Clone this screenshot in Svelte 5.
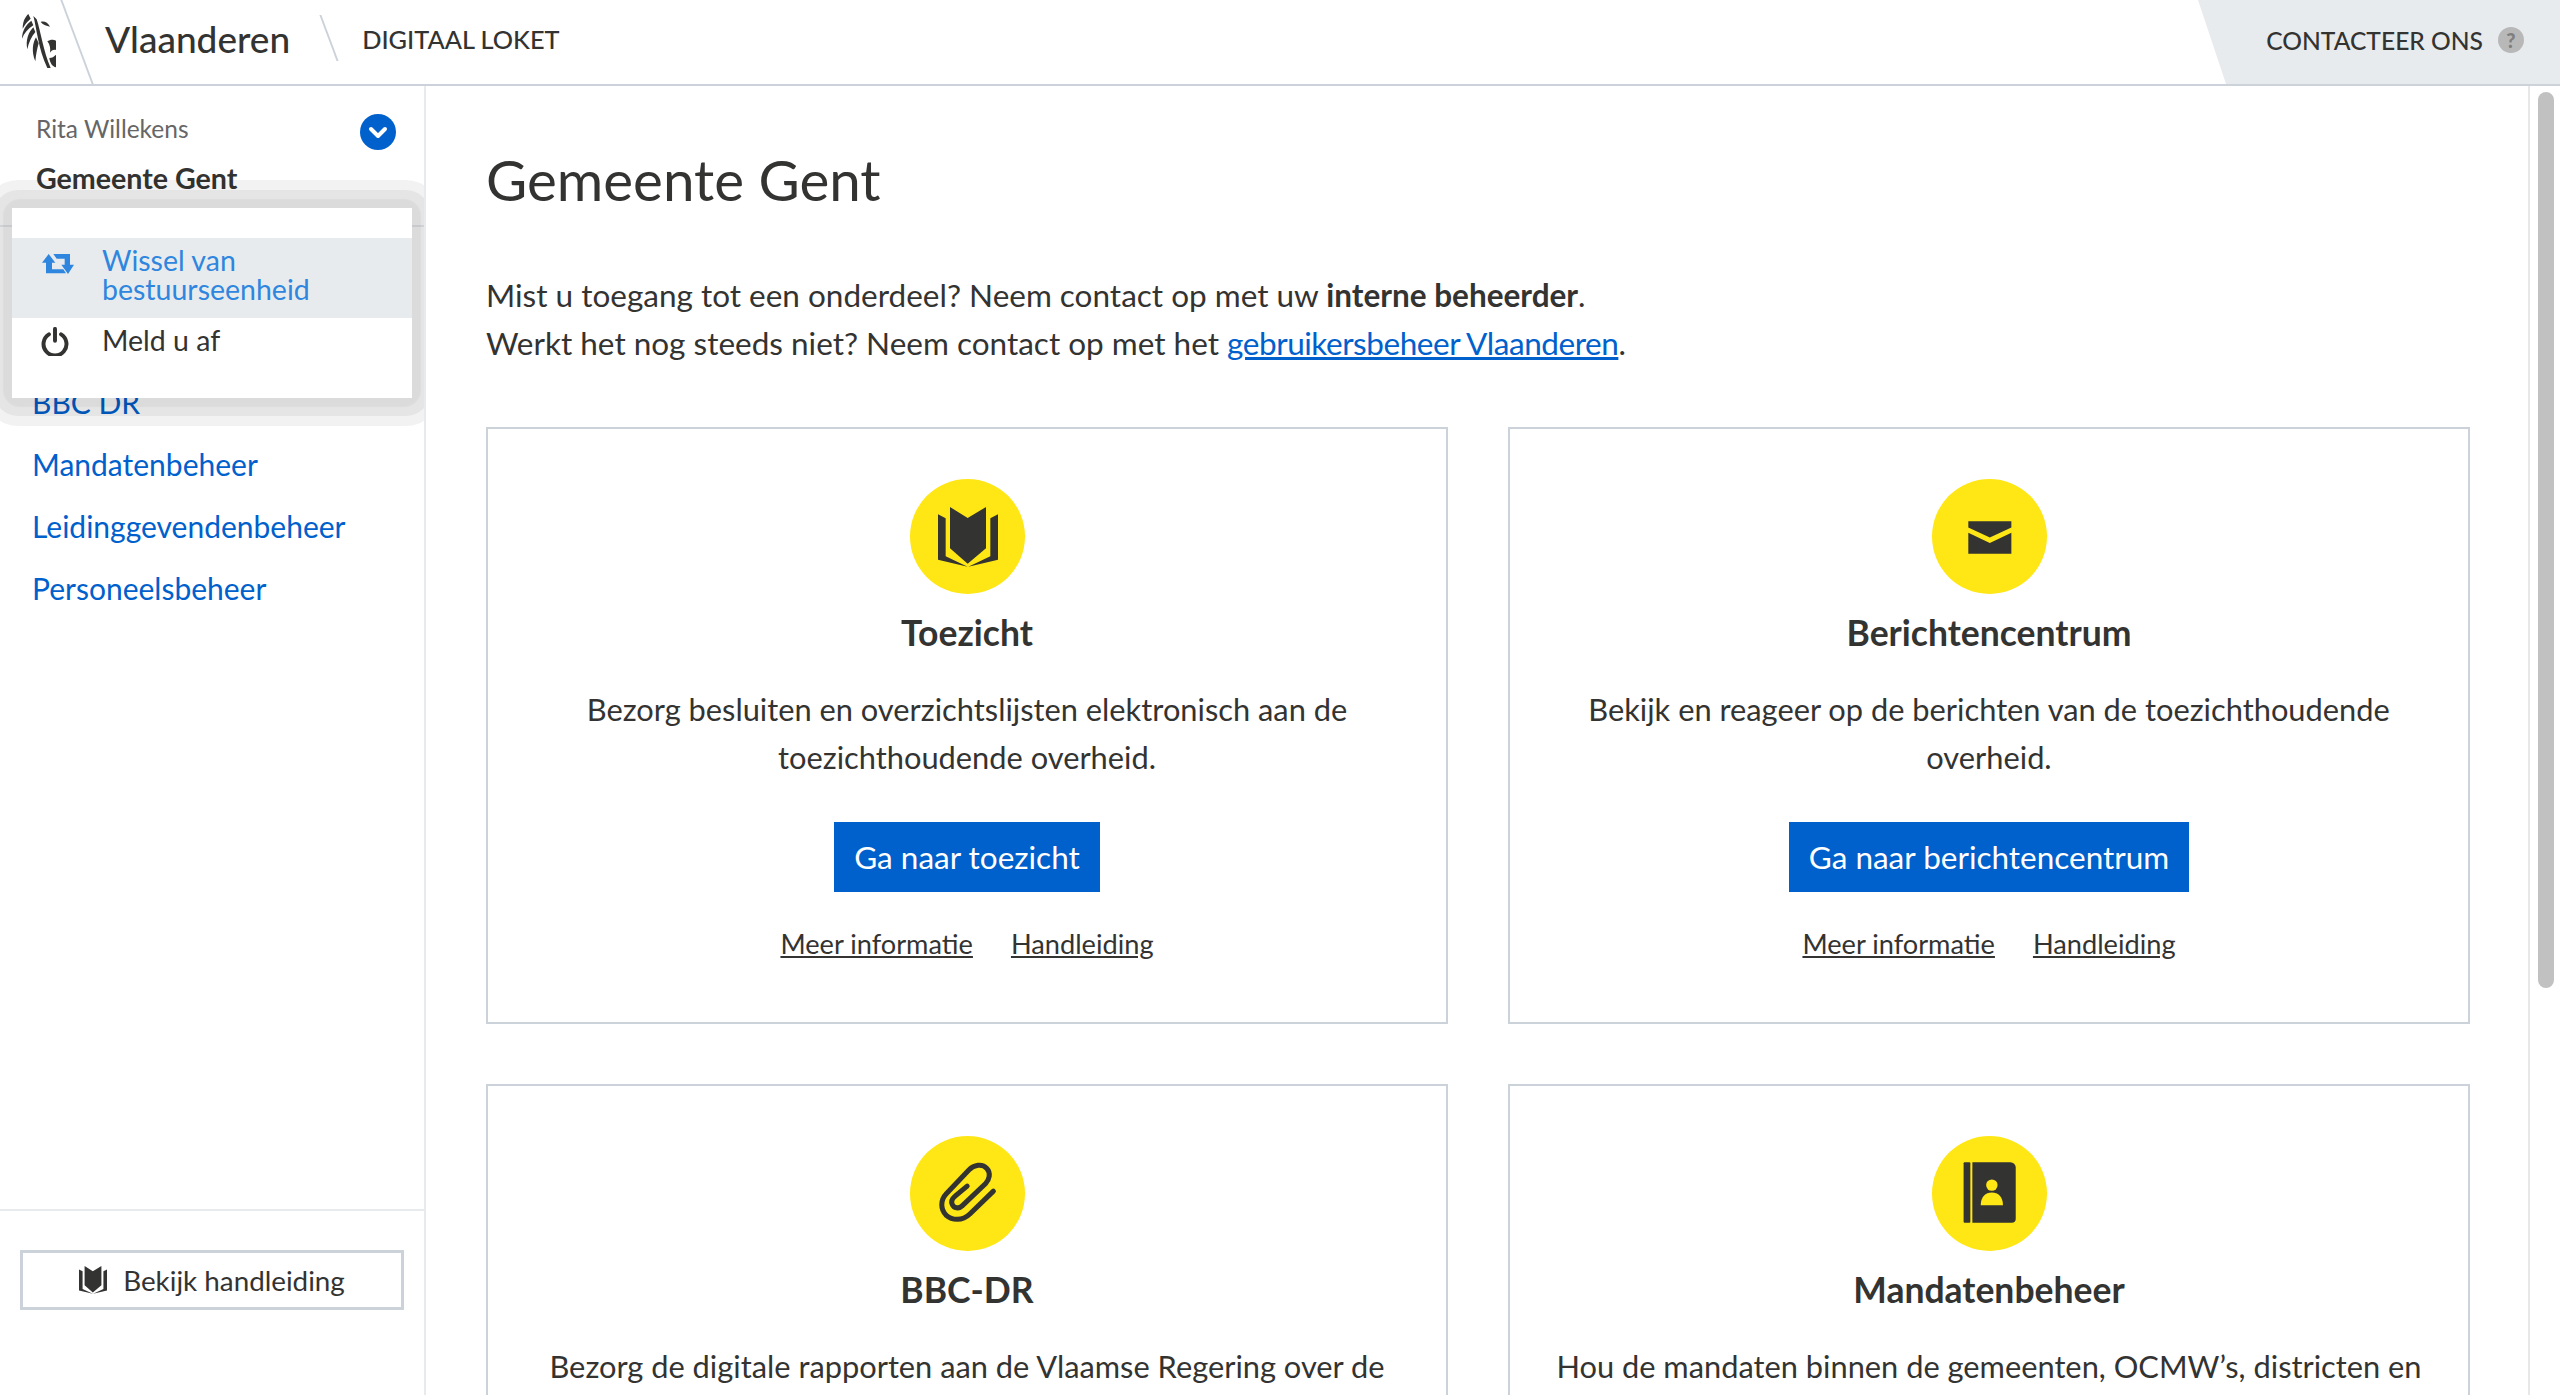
<script>
  const cards = [
    {
      id: "book",
      title: "Toezicht",
      text: "Bezorg besluiten en overzichtslijsten elektronisch aan de toezichthoudende overheid.",
      action: "Ga naar toezicht",
    },
    {
      id: "mail",
      title: "Berichtencentrum",
      text: "Bekijk en reageer op de berichten van de toezichthoudende overheid.",
      action: "Ga naar berichtencentrum",
    },
    {
      id: "clip",
      title: "BBC-DR",
      text: "Bezorg de digitale rapporten aan de Vlaamse Regering over de",
    },
    {
      id: "contacts",
      title: "Mandatenbeheer",
      text: "Hou de mandaten binnen de gemeenten, OCMW’s, districten en",
    },
  ];

  const nav = ["BBC DR", "Mandatenbeheer", "Leidinggevendenbeheer", "Personeelsbeheer"];
</script>

{#snippet book(cls)}
  <svg class={cls} viewBox="232 174 180 180" aria-hidden="true">
    <path d="M232 196 255 208V322L321 353 232 332Z" />
    <path d="M268 174 321 207 376 174V298L321 344 268 298Z" />
    <path d="M412 196 389 208V322L323 353 412 332Z" />
  </svg>
{/snippet}

<div class="page">
  <header class="topbar">
    <svg class="lion" viewBox="0 0 180 204" aria-hidden="true">
      <path d="M55 18C46 26 38 40 38 62 44 50 52 40 62 32Z" />
      <path d="M64 38C50 48 36 66 36 92 42 76 54 62 70 52Z" />
      <path d="M70 58C56 72 46 96 52 124 56 104 64 86 76 72Z" />
      <path d="M78 88C68 104 64 132 76 160 78 138 82 120 86 106Z" />
      <path d="M70 24C80 60 84 120 112 180L122 180C100 130 92 70 80 34Z" />
      <path d="M92 42C102 38 114 44 120 56 110 54 100 52 92 42Z" />
      <path d="M112 100C120 94 132 94 138 98V126C130 124 124 128 120 134 122 122 120 110 112 100Z" />
      <path d="M118 150C126 150 132 146 138 140V178C128 176 120 166 118 150Z" />
    </svg>
    <span class="slash main"></span>
    <span class="brand">Vlaanderen</span>
    <span class="slash small"></span>
    <span class="loket">DIGITAAL LOKET</span>
    <div class="contact">
      <span>CONTACTEER ONS</span>
      <span class="help">?</span>
    </div>
  </header>

  <div class="body">
    <aside class="sidebar">
      <div class="user">
        <div class="names">
          <span class="person">Rita Willekens</span>
          <strong>Gemeente Gent</strong>
        </div>
        <span class="toggle">
          <svg viewBox="0 0 36 36" aria-hidden="true"><path d="M11 15 18 22 25 15" /></svg>
        </span>
      </div>

      <nav class="nav">
        {#each nav as item}
          <a href="#top">{item}</a>
        {/each}
      </nav>

      <div class="foot">
        <button class="guide">
          {@render book("guide-icon")}
          Bekijk handleiding
        </button>
      </div>

      <div class="dropdown">
        <ul>
          <li class="active">
            <svg class="swap" viewBox="36 42 96 60" aria-hidden="true">
              <path d="M36 68 56 42 76 68H66V88H100L108 100H48V68Z" />
              <path d="M70 42H120V74H132L114 102 94 74H104V56H80Z" />
            </svg>
            <span>Wissel van bestuurseenheid</span>
          </li>
          <li>
            <svg class="power" viewBox="0 0 78 80" aria-hidden="true">
              <path d="M22 20A32 32 0 1 0 56 20" />
              <path d="M39 5V38" />
            </svg>
            <span>Meld u af</span>
          </li>
        </ul>
      </div>
    </aside>

    <main class="content">
      <h1>Gemeente Gent</h1>
      <p class="intro">
        Mist u toegang tot een onderdeel? Neem contact op met uw <b>interne beheerder</b>.<br />
        Werkt het nog steeds niet? Neem contact op met het
        <a href="#top">gebruikersbeheer Vlaanderen</a>.
      </p>

      <div class="grid">
        {#each cards as card}
          <section class="card">
            <div class="badge">
              {#if card.id === "book"}
                {@render book("big-book")}
              {:else if card.id === "mail"}
                <svg viewBox="96 90 342 342" aria-hidden="true">
                  <path d="M204 216H332V234L268 264 204 234Z" />
                  <path d="M204 250 268 280 332 250V312H204Z" />
                </svg>
              {:else if card.id === "clip"}
                <svg viewBox="150 54 342 342" aria-hidden="true">
                  <path
                    class="clip"
                    d="M398 218 328 286C305 308 275 305 258 290 240 272 240 245 258 226L325 155C340 140 365 135 378 150 392 165 385 185 375 195L305 262C295 272 280 268 276 258 270 248 278 238 285 232L320 203"
                  />
                </svg>
              {:else}
                <svg viewBox="96 54 342 342" aria-hidden="true">
                  <rect x="190" y="132" width="20" height="180" rx="3" />
                  <path d="M216 132H329A16 16 0 0 1 345 148V300A12 12 0 0 1 333 312H216Z" />
                  <circle class="cut" cx="274" cy="200" r="17" />
                  <path class="cut" d="M241 260C241 235 255 222 274 222 293 222 307 235 307 260Z" />
                </svg>
              {/if}
            </div>
            <h2>{card.title}</h2>
            <p>{card.text}</p>
            {#if card.action}
              <a class="cta" href="#top">{card.action}</a>
              <div class="links">
                <a href="#top">Meer informatie</a>
                <a href="#top">Handleiding</a>
              </div>
            {/if}
          </section>
        {/each}
      </div>
    </main>

    <div class="scrollbar"><span></span></div>
  </div>
</div>

<style>
  :global(body) {
    margin: 0;
    background: #fff;
  }

  .page {
    display: flex;
    flex-direction: column;
    height: 1395px;
    overflow: hidden;
    font-family: Lato, "Open Sans", sans-serif;
    color: #333332;
  }

  .topbar {
    position: relative;
    display: flex;
    align-items: center;
    flex: none;
    height: 84px;
    border-bottom: 2px solid #cbd2da;
  }

  .lion {
    position: absolute;
    left: 10px;
    top: 8px;
    width: 60px;
    height: 68px;
    fill: #333332;
  }

  .slash {
    position: absolute;
    width: 2px;
    background: #cbd2da;
    transform: skewX(20.5deg);
  }

  .slash.main {
    left: 76px;
    top: 0;
    height: 84px;
  }

  .slash.small {
    left: 328px;
    top: 15px;
    height: 46px;
  }

  .brand {
    margin: 0 0 7px 105px;
    font-size: 37px;
    font-weight: 500;
  }

  .loket {
    margin: 0 0 7px 72px;
    font-size: 25.3px;
    font-weight: 500;
  }

  .contact {
    display: flex;
    align-items: center;
    justify-content: flex-end;
    gap: 15px;
    margin-left: auto;
    align-self: stretch;
    width: 362px;
    padding: 0 36px 4px 0;
    box-sizing: border-box;
    background: #e8ebee;
    clip-path: polygon(0 0, 100% 0, 100% 100%, 28px 100%);
    font-size: 24.6px;
    font-weight: 500;
  }

  .help {
    display: flex;
    align-items: center;
    justify-content: center;
    width: 26px;
    height: 26px;
    border-radius: 50%;
    background: #b8b8b8;
    color: #7f7f7f;
    font-size: 20px;
    font-weight: 900;
  }

  .body {
    display: flex;
    flex: 1;
    min-height: 0;
  }

  .sidebar {
    position: relative;
    display: flex;
    flex-direction: column;
    flex: none;
    width: 426px;
    box-sizing: border-box;
    border-right: 2px solid #e8ebee;
    overflow: hidden;
  }

  .user {
    display: flex;
    justify-content: space-between;
    height: 141px;
    padding: 28px 28px 0 36px;
    box-sizing: border-box;
    border-bottom: 2px solid #e8ebee;
  }

  .names {
    display: flex;
    flex-direction: column;
    gap: 19px;
  }

  .person {
    font-size: 24.5px;
    color: #666;
    line-height: 30px;
  }

  .names strong {
    font-size: 28.6px;
    line-height: 30px;
    font-weight: 700;
  }

  .toggle {
    width: 36px;
    height: 36px;
    border-radius: 50%;
    background: #0060cc;
  }

  .toggle svg {
    display: block;
    fill: none;
    stroke: #fff;
    stroke-width: 4;
    stroke-linecap: round;
    stroke-linejoin: round;
  }

  .nav {
    display: flex;
    flex-direction: column;
    gap: 22px;
    flex: 1;
    padding: 155px 0 0 32px;
  }

  .nav a {
    color: #0060cc;
    font-size: 30px;
    line-height: 40px;
    text-decoration: none;
  }

  .foot {
    padding: 39px 20px 85px;
    border-top: 2px solid #e8ebee;
  }

  .guide {
    display: flex;
    align-items: center;
    justify-content: center;
    gap: 16px;
    width: 100%;
    height: 60px;
    background: #fff;
    border: 3px solid #cbd2da;
    font: inherit;
    font-size: 27.8px;
    color: #333332;
  }

  :global(.guide-icon) {
    width: 28px;
    height: 28px;
    fill: #333332;
  }

  /* soft stepped halo round the menu, clipped by the sidebar */
  .dropdown {
    position: absolute;
    z-index: 1;
    left: 12px;
    top: 122px;
    width: 400px;
    border-radius: 8px;
    box-shadow: 0 0 1px 9px rgba(0, 0, 0, 0.045);
    font-size: 28.5px;
    line-height: 29px;
  }

  .dropdown::before,
  .dropdown::after {
    content: "";
    position: absolute;
    z-index: -1;
    background: rgba(0, 0, 0, 0.05);
  }

  .dropdown::before {
    inset: -28px;
    border-radius: 34px;
  }

  .dropdown::after {
    inset: -18px;
    border-radius: 24px;
  }

  .dropdown ul {
    margin: 0;
    padding: 30px 0;
    list-style: none;
    background: #fff;
  }

  .dropdown li {
    display: flex;
    align-items: center;
    min-height: 50px;
    padding: 0 40px 0 90px;
    position: relative;
  }

  .dropdown li > span {
    position: relative;
    top: -3px;
  }

  .dropdown li.active {
    padding-top: 11px;
    padding-bottom: 11px;
    background: #e8ebee;
    color: #2e86de;
  }

  .swap {
    position: absolute;
    left: 30px;
    top: 16px;
    width: 32px;
    height: 20px;
    fill: #2e86de;
  }

  .power {
    position: absolute;
    left: 29px;
    top: 9px;
    width: 28px;
    height: 29px;
    fill: none;
    stroke: #333332;
    stroke-width: 11;
    stroke-linecap: round;
  }

  .content {
    flex: 1;
    min-width: 0;
    padding: 0 58px 0 60px;
    overflow: hidden;
  }

  h1 {
    margin: 60px 0 0;
    font-size: 56.5px;
    line-height: 66px;
    font-weight: 400;
  }

  .intro {
    margin: 60px 0 0;
    font-size: 31.5px;
    line-height: 47.5px;
  }

  .intro a {
    color: #0060cc;
    letter-spacing: -0.45px;
  }

  .grid {
    display: grid;
    grid-template-columns: 1fr 1fr;
    gap: 60px;
    margin-top: 60px;
  }

  .card {
    display: flex;
    flex-direction: column;
    align-items: center;
    height: 597px;
    padding: 50px 40px 0;
    box-sizing: border-box;
    border: 2px solid #cbd2da;
    text-align: center;
  }

  .badge {
    width: 115px;
    height: 115px;
    border-radius: 50%;
    background: #ffe615;
    flex: none;
  }

  .badge svg {
    display: block;
    width: 100%;
    height: 100%;
    fill: #333332;
  }

  .badge :global(.big-book) {
    width: 60px;
    height: 60px;
    padding: 28px;
  }

  .badge .clip {
    fill: none;
    stroke: #333332;
    stroke-width: 15;
    stroke-linecap: round;
  }

  .badge .cut {
    fill: #ffe615;
  }

  h2 {
    margin: 17px 0 0;
    font-size: 35.5px;
    line-height: 44px;
    font-weight: 700;
  }

  .card p {
    margin: 31px 0 0;
    font-size: 30.8px;
    line-height: 48px;
  }

  .cta {
    margin-top: 40px;
    padding: 0 20px;
    background: #0060cc;
    color: #fff;
    font-size: 31.5px;
    line-height: 70px;
    text-decoration: none;
  }

  .links {
    display: flex;
    gap: 38px;
    margin-top: 35px;
    font-size: 27.2px;
  }

  .links a {
    color: #333332;
  }

  .scrollbar {
    flex: none;
    width: 32px;
    box-sizing: border-box;
    padding: 6px 6px 0 8px;
    border-left: 2px solid #e8e8e8;
  }

  .scrollbar span {
    display: block;
    height: 896px;
    border-radius: 8px;
    background: #c1c1c1;
  }
</style>
